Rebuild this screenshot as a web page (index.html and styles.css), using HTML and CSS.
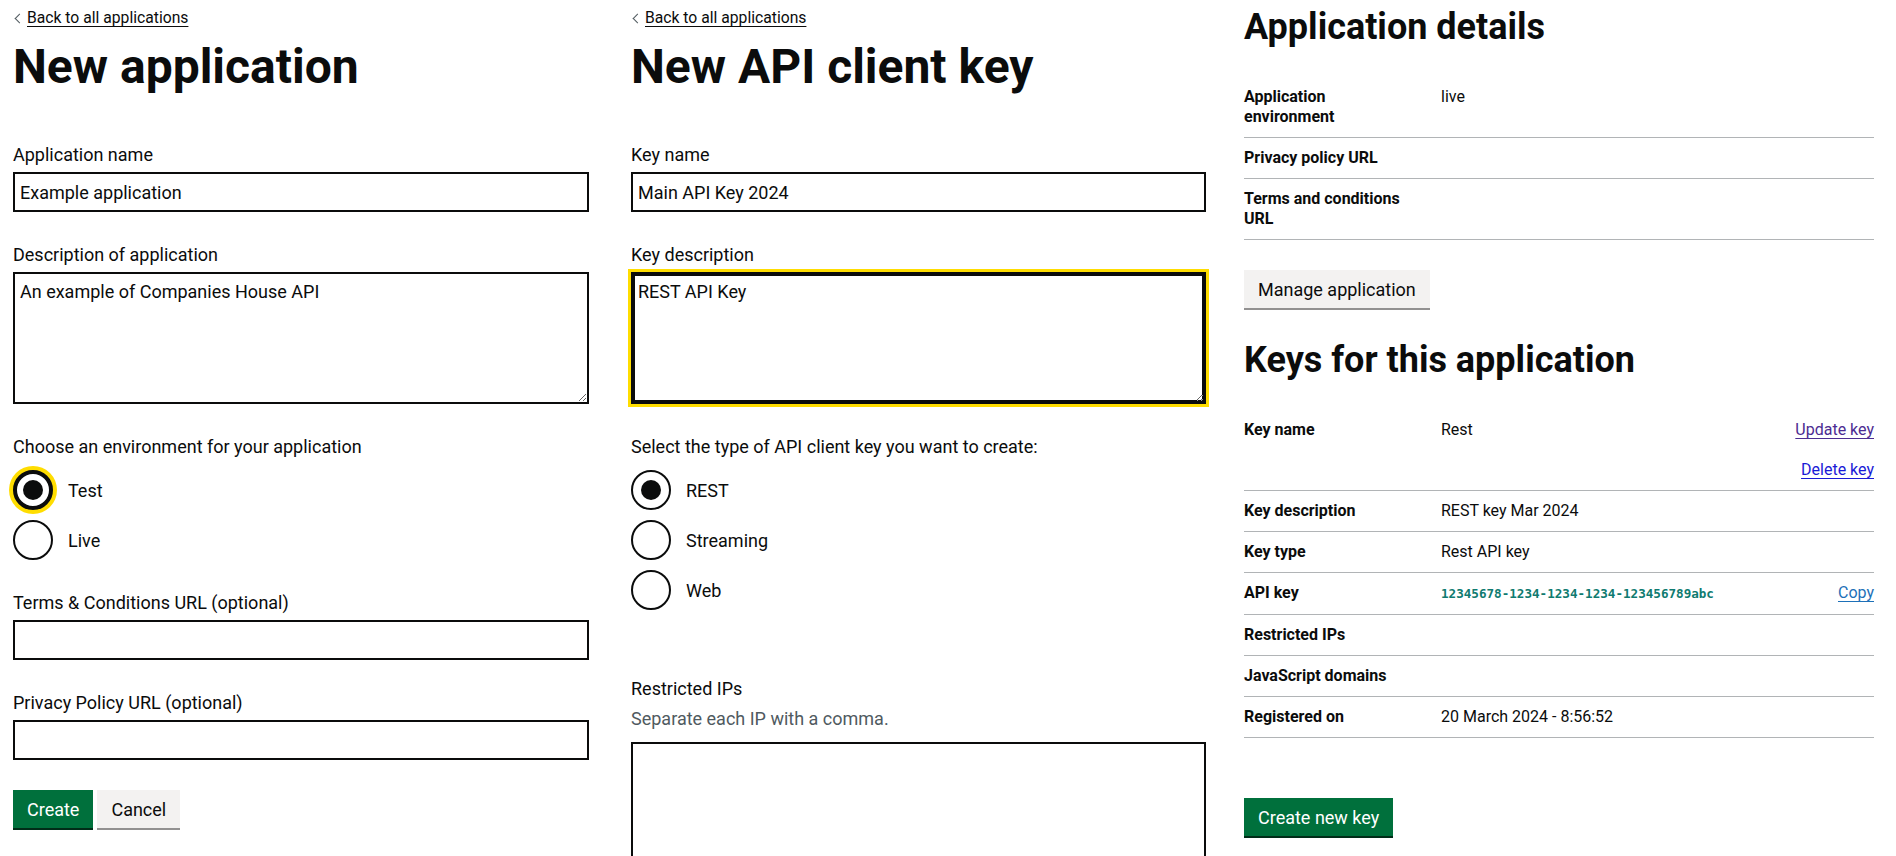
FILE: index.html
```html
<!DOCTYPE html>
<html lang="en">
<head>
<meta charset="utf-8">
<title>Companies House API applications</title>
<link rel="stylesheet" href="styles.css">
</head>
<body>
<div class="page">

  <section class="col col-left">
    <a class="back-link" href="#">Back to all applications</a>
    <h1 class="heading-xl">New application</h1>

    <div class="form-group">
      <label class="label" for="app-name">Application name</label>
      <input class="input" id="app-name" type="text" value="Example application">
    </div>

    <div class="form-group">
      <label class="label" for="app-desc">Description of application</label>
      <textarea class="textarea" id="app-desc">An example of Companies House API</textarea>
    </div>

    <fieldset class="form-group fieldset">
      <legend class="legend">Choose an environment for your application</legend>
      <div class="radios">
        <div class="radio"><span class="radio-mark is-checked is-focused"></span><span class="radio-label">Test</span></div>
        <div class="radio"><span class="radio-mark"></span><span class="radio-label">Live</span></div>
      </div>
    </fieldset>

    <div class="form-group">
      <label class="label" for="app-terms">Terms &amp; Conditions URL (optional)</label>
      <input class="input" id="app-terms" type="text" value="">
    </div>

    <div class="form-group">
      <label class="label" for="app-privacy">Privacy Policy URL (optional)</label>
      <input class="input" id="app-privacy" type="text" value="">
    </div>

    <div class="button-group">
      <button class="button" type="button">Create</button>
      <button class="button button-secondary" type="button">Cancel</button>
    </div>
  </section>

  <section class="col col-mid">
    <a class="back-link" href="#">Back to all applications</a>
    <h1 class="heading-xl">New API client key</h1>

    <div class="form-group">
      <label class="label" for="key-name">Key name</label>
      <input class="input" id="key-name" type="text" value="Main API Key 2024">
    </div>

    <div class="form-group">
      <label class="label" for="key-desc">Key description</label>
      <textarea class="textarea is-focused" id="key-desc">REST API Key</textarea>
    </div>

    <fieldset class="form-group fieldset">
      <legend class="legend">Select the type of API client key you want to create:</legend>
      <div class="radios">
        <div class="radio"><span class="radio-mark is-checked"></span><span class="radio-label">REST</span></div>
        <div class="radio"><span class="radio-mark"></span><span class="radio-label">Streaming</span></div>
        <div class="radio"><span class="radio-mark"></span><span class="radio-label">Web</span></div>
      </div>
    </fieldset>

    <div class="form-group form-group-spaced">
      <label class="label" for="key-ips">Restricted IPs</label>
      <div class="hint">Separate each IP with a comma.</div>
      <textarea class="textarea textarea-tall" id="key-ips"></textarea>
    </div>
  </section>

  <section class="col col-right">
    <h2 class="heading-l">Application details</h2>
    <dl class="summary-list">
      <div class="summary-row">
        <dt class="summary-key">Application environment</dt>
        <dd class="summary-value">live</dd>
        <dd class="summary-actions"></dd>
      </div>
      <div class="summary-row">
        <dt class="summary-key">Privacy policy URL</dt>
        <dd class="summary-value"></dd>
        <dd class="summary-actions"></dd>
      </div>
      <div class="summary-row">
        <dt class="summary-key">Terms and conditions URL</dt>
        <dd class="summary-value"></dd>
        <dd class="summary-actions"></dd>
      </div>
    </dl>
    <button class="button button-secondary button-spaced" type="button">Manage application</button>

    <h2 class="heading-l">Keys for this application</h2>
    <dl class="summary-list summary-list-spaced">
      <div class="summary-row">
        <dt class="summary-key">Key name</dt>
        <dd class="summary-value">Rest</dd>
        <dd class="summary-actions">
          <a class="link link-visited action" href="#">Update key</a>
          <a class="link link-plain action" href="#">Delete key</a>
        </dd>
      </div>
      <div class="summary-row">
        <dt class="summary-key">Key description</dt>
        <dd class="summary-value">REST key Mar 2024</dd>
        <dd class="summary-actions"></dd>
      </div>
      <div class="summary-row">
        <dt class="summary-key">Key type</dt>
        <dd class="summary-value">Rest API key</dd>
        <dd class="summary-actions"></dd>
      </div>
      <div class="summary-row">
        <dt class="summary-key">API key</dt>
        <dd class="summary-value"><code class="api-key">12345678-1234-1234-1234-123456789abc</code></dd>
        <dd class="summary-actions"><a class="link" href="#">Copy</a></dd>
      </div>
      <div class="summary-row">
        <dt class="summary-key">Restricted IPs</dt>
        <dd class="summary-value"></dd>
        <dd class="summary-actions"></dd>
      </div>
      <div class="summary-row">
        <dt class="summary-key">JavaScript domains</dt>
        <dd class="summary-value"></dd>
        <dd class="summary-actions"></dd>
      </div>
      <div class="summary-row">
        <dt class="summary-key">Registered on</dt>
        <dd class="summary-value">20 March 2024 - 8:56:52</dd>
        <dd class="summary-actions"></dd>
      </div>
    </dl>
    <button class="button" type="button">Create new key</button>
  </section>

</div>
</body>
</html>
```

FILE: styles.css
```css
* {
  box-sizing: border-box;
}

html,
body {
  margin: 0;
  padding: 0;
  overflow: hidden;
  background: #ffffff;
}

body {
  font-family: Roboto, "Liberation Sans", Arial, sans-serif;
  color: #0b0c0c;
  font-size: 18px;
  line-height: 25px;
}

.page {
  display: flex;
  align-items: flex-start;
  height: 856px;
  overflow: hidden;
}

.col-left {
  width: 576px;
  margin-left: 13px;
  padding-top: 8px;
}

.col-mid {
  width: 575px;
  margin-left: 42px;
  padding-top: 8px;
}

.col-right {
  width: 630px;
  margin-left: 38px;
  padding-top: 7px;
}

/* Back link */
.back-link {
  display: block;
  width: max-content;
  position: relative;
  padding-left: 14px;
  margin-bottom: 14px;
  font-size: 15.7px;
  line-height: 20px;
  color: #0b0c0c;
  text-decoration: underline;
  text-decoration-thickness: 1px;
  text-underline-offset: 0.16em;
}

.back-link::before {
  content: "";
  position: absolute;
  top: 0;
  bottom: 0;
  left: 3px;
  width: 6px;
  height: 6px;
  margin: auto 0;
  transform: rotate(225deg);
  border-style: solid;
  border-width: 1px 1px 0 0;
  border-color: #505a5f;
}

/* Headings */
.heading-xl {
  margin: 0 0 50px;
  font-size: 48px;
  line-height: 50px;
  font-weight: 700;
}

.heading-l {
  margin: 0 0 30px;
  font-size: 36px;
  line-height: 40px;
  font-weight: 700;
}

/* Forms */
.form-group {
  margin: 0 0 30px;
}

.form-group-spaced {
  margin-top: 66px;
}

.label {
  display: block;
  margin-bottom: 5px;
  font-size: 18px;
  line-height: 25px;
}

.hint {
  margin-bottom: 11px;
  font-size: 18px;
  line-height: 25px;
  color: #505a5f;
}

.input {
  display: block;
  width: 100%;
  height: 40px;
  margin: 0;
  padding: 5px;
  border: 2px solid #0b0c0c;
  border-radius: 0;
  background: #ffffff;
  color: #0b0c0c;
  font-family: inherit;
  font-size: 18px;
  line-height: 25px;
}

.textarea {
  display: block;
  width: 100%;
  height: 132px;
  margin: 0;
  padding: 5px;
  border: 2px solid #0b0c0c;
  border-radius: 0;
  background: #ffffff;
  color: #0b0c0c;
  font-family: inherit;
  font-size: 18px;
  line-height: 25px;
  resize: vertical;
}

.textarea.is-focused {
  outline: 3px solid #ffdd00;
  outline-offset: 0;
  box-shadow: inset 0 0 0 2px #0b0c0c;
}

.textarea-tall {
  height: 160px;
}

.fieldset {
  padding: 0;
  border: 0;
  min-width: 0;
}

.legend {
  padding: 0;
  margin-bottom: 11px;
  font-size: 18px;
  line-height: 25px;
}

/* Radios */
.radio {
  display: flex;
  align-items: center;
  min-height: 40px;
  margin-bottom: 10px;
}

.radio:last-child {
  margin-bottom: 0;
}

.radio-mark {
  position: relative;
  flex: none;
  width: 40px;
  height: 40px;
  border: 2px solid #0b0c0c;
  border-radius: 50%;
  background: #ffffff;
}

.radio-mark.is-checked::after {
  content: "";
  position: absolute;
  top: 50%;
  left: 50%;
  width: 20px;
  height: 20px;
  margin: -10px 0 0 -10px;
  border-radius: 50%;
  background: #0b0c0c;
}

.radio-mark.is-focused {
  border-width: 4px;
  box-shadow: 0 0 0 4px #ffdd00;
}

.radio-label {
  margin-left: 15px;
  font-size: 18px;
  line-height: 25px;
}

/* Buttons */
.button-group {
  display: flex;
  align-items: flex-start;
  gap: 4px;
}

.button {
  display: block;
  margin: 0;
  padding: 8px 12px 7px;
  border: 2px solid transparent;
  border-radius: 0;
  background: #00703c;
  color: #ffffff;
  box-shadow: 0 2px 0 #002d18;
  font-family: inherit;
  font-size: 18px;
  line-height: 19px;
  font-weight: 400;
  text-align: center;
  cursor: pointer;
}

.button-secondary {
  background: #f3f2f1;
  color: #0b0c0c;
  box-shadow: 0 2px 0 #929191;
}

.button-spaced {
  margin-bottom: 32px;
}

/* Summary list */
.summary-list {
  margin: 0 0 30px;
  font-size: 16px;
  line-height: 20px;
}

.summary-list-spaced {
  margin-bottom: 60px;
}

.summary-row {
  display: grid;
  grid-template-columns: 197px 1fr auto;
  align-items: baseline;
  padding: 10px 0;
  border-bottom: 1px solid #b1b4b6;
}

.summary-key {
  margin: 0;
  padding-right: 34px;
  font-weight: 700;
}

.summary-value {
  margin: 0;
  padding-right: 20px;
}

.summary-actions {
  margin: 0;
  text-align: right;
}

.action {
  display: block;
}

.action + .action {
  margin-top: 20px;
}

.link {
  color: #1d70b8;
  text-decoration: underline;
  text-decoration-thickness: 1px;
  text-underline-offset: 0.16em;
}

.link-visited {
  color: #4c2c92;
}

.link-plain {
  color: #1a1ad6;
}

.api-key {
  font-family: "DejaVu Sans Mono", "Liberation Mono", monospace;
  font-size: 12.6px;
  font-weight: 700;
  color: #0f7b70;
}
```
